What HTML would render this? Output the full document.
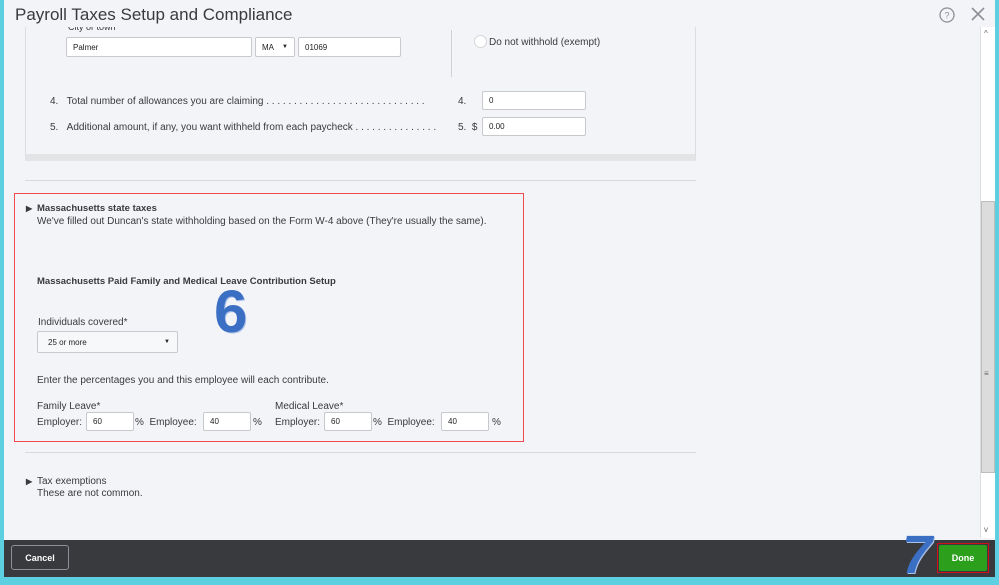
<!DOCTYPE html>
<html><head><style>
*{margin:0;padding:0;box-sizing:border-box}
body{width:999px;height:581px;background:#5ccfe0;font-family:"Liberation Sans",sans-serif;color:#333;position:relative;overflow:hidden}
.a{position:absolute}
.p{position:absolute;left:4px;top:0;width:991px;height:577px;background:#f3f4f8}
.t{font-size:10px;color:#393a3d;position:absolute;white-space:nowrap}
.in{position:absolute;background:#fff;border:1px solid #c8c9cc;border-radius:2px;font-size:8px;padding-left:6px;display:flex;align-items:center;color:#222}
.b{font-weight:bold}
</style></head><body>
<div class="p"></div>
<div class="a" style="left:15px;top:5px;font-size:17px;color:#393a3d">Payroll Taxes Setup and Compliance</div>
<svg class="a" style="left:938px;top:6px" width="18" height="18"><circle cx="9" cy="9" r="7" fill="none" stroke="#8d9096" stroke-width="1.3"/><text x="9" y="12.5" font-size="9" text-anchor="middle" fill="#8d9096" font-family="Liberation Sans">?</text></svg>
<svg class="a" style="left:970px;top:6px" width="16" height="16"><path d="M2 2L14 14M14 2L2 14" stroke="#8d9096" stroke-width="1.6"/></svg>
<div class="a" style="left:25px;top:27px;width:671px;height:134px;border-left:1px solid #dcdde0;border-right:1px solid #dcdde0;border-bottom:7px solid #e3e4e6"></div>
<div class="t" style="left:68px;top:27px;font-size:9px;height:5px;overflow:hidden;line-height:1px">City or town</div>
<div class="in" style="left:66px;top:37px;width:186px;height:20px">Palmer</div>
<div class="in" style="left:255px;top:37px;width:40px;height:20px">MA<span style="margin-left:8px;font-size:6px">▼</span></div>
<div class="in" style="left:298px;top:37px;width:103px;height:20px">01069</div>
<div class="a" style="left:451px;top:30px;width:1px;height:47px;background:#d0d1d4"></div>
<div class="a" style="left:474px;top:35px;width:13px;height:13px;border-radius:50%;background:#fff;border:1px solid #d5d6d9"></div>
<div class="t" style="left:489px;top:37px">Do not withhold (exempt)</div>
<div class="t" style="left:50px;top:96px">4.&nbsp;&nbsp;&nbsp;Total number of allowances you are claiming . . . . . . . . . . . . . . . . . . . . . . . . . . . . .</div>
<div class="t" style="left:50px;top:122px">5.&nbsp;&nbsp;&nbsp;Additional amount, if any, you want withheld from each paycheck . . . . . . . . . . . . . . .</div>
<div class="t" style="left:458px;top:96px">4.</div>
<div class="t" style="left:458px;top:122px">5.&nbsp;&nbsp;$</div>
<div class="in" style="left:482px;top:91px;width:104px;height:19px">0</div>
<div class="in" style="left:482px;top:117px;width:104px;height:19px">0.00</div>
<div class="a" style="left:25px;top:180px;width:671px;height:1px;background:#d8d9dc"></div>
<div class="a" style="left:14px;top:193px;width:510px;height:249px;border:1px solid #ef4a50"></div>
<div class="t b" style="left:26px;top:204px;font-size:8px">▶</div>
<div class="t b" style="left:37px;top:203px;font-size:9.5px">Massachusetts state taxes</div>
<div class="t" style="left:37px;top:216px">We've filled out Duncan's state withholding based on the Form W-4 above (They're usually the same).</div>
<div class="t b" style="left:37px;top:276px;font-size:9.5px">Massachusetts Paid Family and Medical Leave Contribution Setup</div>
<div class="a" style="left:214px;top:284px;font-size:60px;font-weight:bold;color:#3b6fc4;line-height:56px;text-shadow:1px 1px 0 #a9c0e8">6</div>
<div class="t" style="left:38px;top:317px;font-size:10px">Individuals covered*</div>
<div class="in" style="left:37px;top:331px;width:141px;height:22px;background:#f7f8fa;padding-left:10px">25 or more<span style="position:absolute;left:126px;font-size:6px">▼</span></div>
<div class="t" style="left:37px;top:375px">Enter the percentages you and this employee will each contribute.</div>
<div class="t" style="left:37px;top:401px">Family Leave*</div>
<div class="t" style="left:275px;top:401px">Medical Leave*</div>
<div class="t" style="left:37px;top:417px">Employer:</div>
<div class="in" style="left:86px;top:412px;width:48px;height:19px">60</div>
<div class="t" style="left:135px;top:417px">%&nbsp;&nbsp;Employee:</div>
<div class="in" style="left:203px;top:412px;width:48px;height:19px">40</div>
<div class="t" style="left:253px;top:417px">%</div>
<div class="t" style="left:275px;top:417px">Employer:</div>
<div class="in" style="left:324px;top:412px;width:48px;height:19px">60</div>
<div class="t" style="left:373px;top:417px">%&nbsp;&nbsp;Employee:</div>
<div class="in" style="left:441px;top:412px;width:48px;height:19px">40</div>
<div class="t" style="left:492px;top:417px">%</div>
<div class="a" style="left:25px;top:452px;width:671px;height:1px;background:#d8d9dc"></div>
<div class="t b" style="left:26px;top:477px;font-size:8px">▶</div>
<div class="t" style="left:37px;top:476px">Tax exemptions</div>
<div class="t" style="left:37px;top:488px">These are not common.</div>
<div class="a" style="left:980px;top:27px;width:15px;height:511px;background:#fff;border-left:1px solid #ddd"></div>
<div class="a" style="left:981px;top:201px;width:14px;height:272px;background:#dcdcdc;border:1px solid #bdbdbd"></div>
<div class="a" style="left:984px;top:369px;font-size:8px;color:#666">≡</div>
<div class="a" style="left:984px;top:29px;font-size:8px;color:#666">^</div>
<div class="a" style="left:984px;top:525px;font-size:8px;color:#666">v</div>
<div class="a" style="left:4px;top:540px;width:991px;height:37px;background:#393a3d"></div>
<div class="a" style="left:11px;top:545px;width:58px;height:25px;border:1px solid #8d9096;border-radius:3px;color:#fff;font-size:9px;font-weight:bold;display:flex;align-items:center;justify-content:center">Cancel</div>
<div class="a" style="left:902px;top:528px;font-size:54px;font-weight:bold;font-style:italic;color:#3b6fc4;line-height:54px;text-shadow:1px 1px 0 #a9c0e8">7</div>
<div class="a" style="left:937px;top:543px;width:52px;height:30px;border:1px solid #d0101a"></div>
<div class="a" style="left:939px;top:545px;width:48px;height:26px;background:#2ca01c;border-radius:2px;color:#fff;font-size:9px;font-weight:bold;display:flex;align-items:center;justify-content:center">Done</div>
</body></html>
